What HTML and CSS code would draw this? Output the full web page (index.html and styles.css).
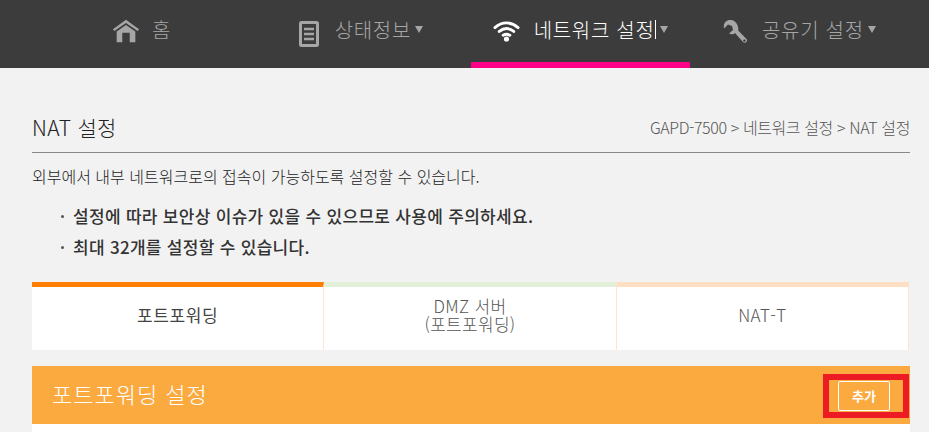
FILE: index.html
```html
<!DOCTYPE html>
<html lang="ko">
	<head>
		<meta charset="UTF-8">
		<title>NAT 설정</title>
		<link rel="stylesheet" href="styles.css">
	</head>
	<body>
		<div class="nav">
			<ul class="menu">
				<li>
					<svg class="ico" width="28" height="26" viewBox="0 0 30 26"><path d="M15 1 L1 11 L2.5 13 L15 4.5 L27.5 13 L29 11 Z" fill="#a6a6a6"/><path d="M15 6.5 L5 13.5 V25 H11 V15 H19 V25 H25 V13.5 Z" fill="#a6a6a6"/></svg>
					<span>홈</span>
				</li>
				<li>
					<svg class="ico ico-doc" width="20" height="26" viewBox="0 0 20 26"><rect x="1.5" y="1.5" width="17" height="23" rx="1" fill="none" stroke="#a6a6a6" stroke-width="3"/><path d="M5 8 H15 M5 13 H15 M5 18 H15" stroke="#a6a6a6" stroke-width="2.4"/></svg>
					<span>상태정보</span><i class="arrow"></i>
				</li>
				<li class="on">
					<svg class="ico" width="27" height="22" viewBox="0 0 28 22"><g fill="none" stroke="#fff" stroke-width="3" stroke-linecap="round"><path d="M2 7.5 C9.5 1 18.5 1 26 7.5"/><path d="M6.5 11.5 C11.5 7.5 16.5 7.5 21.5 11.5"/><path d="M10.5 15.5 C13 14 15 14 17.5 15.5"/></g><circle cx="14" cy="19.3" r="2.7" fill="#fff"/></svg>
					<span>네트워크 설정</span><b class="caret"></b><i class="arrow"></i>
				</li>
				<li>
					<svg class="ico" width="25" height="25" viewBox="0 0 25 25"><path d="M8 1 C4 .5 .5 3.5 .8 8 L1.2 9.5 L5 5.5 L9 7 L10 11 L6 14.5 C8 15.6 10.6 15.5 12 14 L20 23 C22 25 25.5 22.5 23.5 20 L15.2 11.5 C16 7 13 1.5 8 1 Z" fill="#a6a6a6"/><circle cx="21.4" cy="21.6" r="1.2" fill="#3c3c3c"/></svg>
					<span>공유기 설정</span><i class="arrow"></i>
				</li>
			</ul>
		</div>
		<div class="content">
			<div class="head">
				<h2>NAT 설정</h2>
				<p class="path">GAPD-7500 &gt; 네트워크 설정 &gt; NAT 설정</p>
			</div>
			<p class="desc">외부에서 내부 네트워크로의 접속이 가능하도록 설정할 수 있습니다.</p>
			<ul class="notes">
				<li>설정에 따라 보안상 이슈가 있을 수 있으므로 사용에 주의하세요.</li>
				<li>최대 32개를 설정할 수 있습니다.</li>
			</ul>
			<ul class="tabs">
				<li class="tab1">포트포워딩</li>
				<li class="tab2">DMZ 서버<br>(포트포워딩)</li>
				<li class="tab3">NAT-T</li>
			</ul>
			<div class="panel-title">
				<h3>포트포워딩 설정</h3>
				<div class="mark"><button class="add">추가</button></div>
			</div>
			<div class="panel-body"></div>
		</div>
	</body>
</html>
```

FILE: styles.css
```css
*{
	margin: 0;
	padding: 0;
	box-sizing: border-box;
}
html,body{
	height: 432px;
	overflow: hidden;
}
body{
	background-color: #f2f2f2;
	color: #333;
	font-family: "Noto Sans CJK KR", "Liberation Sans", sans-serif;
	font-weight: 300;
}
ul{
	list-style: none;
}
.nav{
	height: 68px;
	background-color: #3c3c3c;
	padding: 0 20px 0 32px;
}
.menu{
	display: flex;
	height: 68px;
}
.menu li{
	width: 219.5px;
	height: 68px;
	display: flex;
	align-items: center;
	justify-content: center;
	color: #a6a6a6;
	font-size: 20px;
	letter-spacing: 0.7px;
	padding-bottom: 6px;
}
.menu .on{
	color: #fff;
	padding-bottom: 0;
	border-bottom: 6px solid #ff0088;
}
.ico{
	margin-right: 14px;
}
.ico-doc{
	margin-right: 16px;
	margin-top: 6px;
}
.menu li:first-child .ico{
	margin-right: 12px;
}
.menu span{
	margin-top: -4px;
}
.arrow{
	width: 0;
	height: 0;
	margin: -3px 0 0 4px;
	border-left: 4.5px solid transparent;
	border-right: 4.5px solid transparent;
	border-top: 7px solid #a6a6a6;
}
.caret{
	width: 1px;
	height: 19px;
	margin: -4px 0 0 0;
	background-color: #fff;
}
.content{
	padding: 0 19px 0 32px;
}
.head{
	height: 85px;
	padding: 46px 0 12px;
	display: flex;
	justify-content: space-between;
	align-items: center;
	border-bottom: 1px solid #888;
}
.head h2{
	font-size: 21px;
	font-weight: 300;
	letter-spacing: 0.3px;
	color: #222;
}
.path{
	font-size: 16px;
	color: #555;
	letter-spacing: -0.4px;
}
.desc{
	font-size: 16px;
	line-height: 20px;
	margin-top: 13px;
	color: #222;
}
.notes{
	margin-top: 14px;
}
.notes li{
	font-size: 17px;
	font-weight: 500;
	letter-spacing: 0.3px;
	line-height: 31px;
	padding-left: 41px;
	position: relative;
}
.notes li:before{
	content: "";
	position: absolute;
	left: 29px;
	top: 15px;
	width: 3px;
	height: 3px;
	border-radius: 50%;
	background-color: #555;
}
.tabs{
	display: flex;
	height: 68px;
	margin: 20px 1px 0 0;
}
.tabs li{
	flex: 1;
	background-color: #fff;
	display: flex;
	align-items: center;
	justify-content: center;
	text-align: center;
	font-size: 17px;
	letter-spacing: 0.3px;
	line-height: 18px;
	color: #555;
	padding-bottom: 8px;
	border-top: 5px solid #ddd;
	border-right: 1px solid #fbe5d6;
}
.tabs .tab1{
	border-top-color: #ff7f00;
	color: #444;
	font-weight: 400;
	letter-spacing: 0.6px;
}
.tabs .tab2{
	border-top-color: #e2f0d9;
}
.tabs .tab3{
	border-top-color: #ffdfc4;
}
.panel-title{
	height: 58px;
	margin-top: 16px;
	background-color: #fbaa3f;
	display: flex;
	justify-content: space-between;
	align-items: center;
	padding: 0 1px 0 20px;
}
.panel-title h3{
	font-size: 22px;
	font-weight: 300;
	color: #fff;
	letter-spacing: 1px;
	margin-top: -4px;
}
.mark{
	width: 86px;
	height: 44px;
	margin-top: 1px;
	padding-left: 9px;
	border: 6px solid #ed1c24;
	display: flex;
	align-items: center;
}
.add{
	width: 52px;
	height: 30px;
	border: 1px solid #fff;
	border-radius: 2px;
	background-color: #fbaa3f;
	color: #fff;
	font-family: inherit;
	font-size: 13px;
	font-weight: 700;
}
.panel-body{
	height: 20px;
	background-color: #fff;
}
```
